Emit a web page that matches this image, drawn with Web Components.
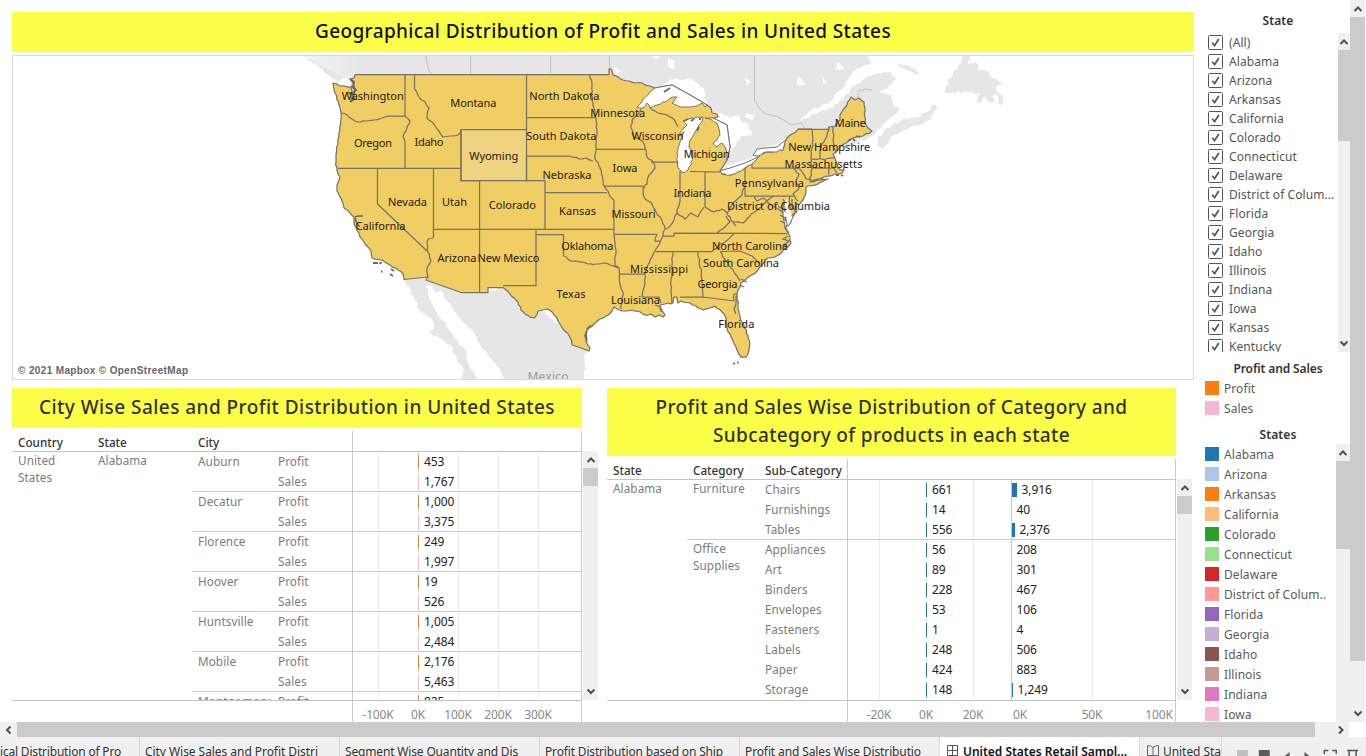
<!DOCTYPE html>
<html lang="en">
<head>
<meta charset="utf-8">
<title>United States Retail Sample</title>
<style>
html,body{margin:0;height:756px;overflow:hidden;background:#fff;font-family:"Noto Sans","Open Sans",sans-serif;font-size:12px;color:#333}
</style>
</head>
<body>
<retail-app></retail-app>
<script>
const define = (name, html, setup) => customElements.define(name, class extends HTMLElement {
  connectedCallback() {
    if (this.shadowRoot) return;
    this.attachShadow({mode: 'open'}).innerHTML = typeof html === 'function' ? html(this) : html;
    if (setup) setup(this, this.shadowRoot);
  }
});

/* One line of text, tracked so that it fills the width given in "w". */
define('fit-text', '<style>:host{display:inline-block;white-space:nowrap}span{display:inline-block}</style><span><slot></slot></span>', (el, root) => {
  const w = +el.getAttribute('w');
  if (!w) return;
  const s = root.querySelector('span'), n = el.textContent.length;
  const d = (w - s.getBoundingClientRect().width) / n;
  s.style.letterSpacing = d.toFixed(3) + 'px';
});

define('title-banner', '<style>:host{display:flex;flex-direction:column;align-items:center;background:#fbff48;font-size:19px;font-weight:500;line-height:28px;padding-top:5px;box-sizing:border-box;color:#333;flex:none}</style><slot></slot>');

/* Scroll bar: "size" is the thumb's length. */
define('scroll-bar', el => {
  const h = el.hasAttribute('horizontal');
  const arrow = d => `<i><svg width="10" height="10" viewBox="0 0 10 10"><path d="${d}" fill="none" stroke="#505050" stroke-width="2"/></svg></i>`;
  return `<style>:host{display:flex;flex-direction:${h ? 'row' : 'column'};background:#f0f0f0;flex:none}
  i{flex:none;display:flex;align-items:center;justify-content:center;${h ? 'width:17px' : 'height:17px'}}
  b{flex:none;background:#cbcbcb;${h ? 'width' : 'height'}:${el.getAttribute('size')}px}u{flex:1}</style>
  ${arrow(h ? 'M6.5 1.5 3 5 6.5 8.5' : 'M1.5 7 5 3.5 8.500 7')}<b></b><u></u>${arrow(h ? 'M3 1.5 6.5 5 3 8.5' : 'M1.5 2.500 5 6 8.5 2.500')}`;
});

define('check-item', `<style>:host{display:flex;align-items:center;height:19px;color:#555;letter-spacing:.07px;white-space:nowrap;flex:none}
i{width:13px;height:13px;border:1px solid #555;border-radius:1.5px;margin-right:6px;display:flex;flex:none}</style>
<i><svg width="13" height="13" viewBox="0 0 13 13"><path d="M3.2 6.8 5.6 9.5 9.8 3" fill="none" stroke="#555" stroke-width="1.7"/></svg></i><slot></slot>`);

define('legend-item', el => `<style>:host{display:flex;align-items:center;height:20px;color:#5b5b5b;letter-spacing:.07px;white-space:nowrap;flex:none}
i{width:14px;height:14px;background:${el.getAttribute('color')};margin-right:5px}</style><i></i><slot></slot>`);

/* ---- map ---- */
let seed = 7;
const rnd = () => (seed = (seed * 16807) % 2147483647) / 2147483647 - .5;
/* Points are "x,y"; a trailing ! keeps the segment to that point straight. */
const rough = (pts, amp = 1.5) => {
  let px, py, out = '';
  pts.trim().split(/\s+/).forEach((t, i) => {
    const straight = t.endsWith('!'), [x, y] = t.replace('!', '').split(',').map(Number);
    if (i && !straight) {
      const L = Math.hypot(x - px, y - py), n = Math.floor(L / 2.6);
      for (let k = 1; k < n; k++) {
        const o = rnd() * amp, f = k / n;
        out += `L${(px + (x - px) * f - (y - py) / L * o).toFixed(1)} ${(py + (y - py) * f + (x - px) / L * o).toFixed(1)}`;
      }
    }
    out += (i ? 'L' : 'M') + x + ' ' + y;
    px = x; py = y;
  });
  return out;
};
const LAND = `355,74.7 609,74.7! 609,69! 611,69 613,75 618,77 623,80 629,81 635,83 642,83 650,86 655,88 660,87 672,85! 690,95! 707,105! 711,108 712,113 717,114 718,117 713,118! 727,125! 730,147! 727,160! 720,171! 722,174 730,175 738,172 745,168 752,163 758,157 760,155 766,152 773,152 783,150 785,145 783,143 787,138 792,134 798,129.3 828,129.3! 829,127 832,126.5 835,126 840,120 840,115 843,110 847,105 851,97 855,100 859,98 864,102 865,122 868,128 872,131 863,136 853,138 846,143 840,147 836,152 833,154 835,158 837,163 838,168 843,171 844,167 842,173 835,174 827,176 814,180 810,182 820,180 828,179 818,184 808,186 806,187 806,193 803,200 799,205 796,203 797,211 793,217 791,222 788,226 786,218 786,208 783,203 783,213 784,220 785,226 787,231 790,236 791,243 788,247 784,249 780,254 775,257 768,258 763,264 757,271 750,276 744,281 741,283 738,290 737,294 738,305 740,317 744,325 749.5,341 749,350 746,357 741,357 738,352 736,347 733,341 730,334 727,328 726,318 722,312 715,306 710,308 703,310 696,306 690,303 681,301 678,303 677,297 674,297 673,303 665,304 660,305 662,310 665,315 663,317 659,315 655,317 651,314 645,315 640,312 632,310 626,311 619,310 614,307 612,311 606,316 600,319 594,324 589,328 586,333 586,341 590,348 589,351 581,348! 572,345! 571,339 566,332 560,324 557,318 552,312 548,309 543,310 538,311 536,316 534,318 527,315 521,310 518,302 510,294 503,287.5 488,287.5! 488,292.5! 461,292.5! 426,280! 428,277! 404,279.5! 403,274 398,270 390,265 382,260 372,258 371,251 365,244 360,237 357,230 354,222 354,217 350,213 344,208 342,201 337,191 337,186 340,177 337,170 336,162 336,155 338,142 340,130 341,113 339,105 335,93 333,83 340,86 351,88 353,94 351,101 355,94 354,86 350,79 354,78 355,74.7`;
const LINES = `405,74.7 405,116!|405,116 410,121 406,131 403,137 405,144 405,168!|341,113 347,115 352,119 358,122 366,121 374,120 382,118 391,116 405,116!|338,168.3 461,168.3!|414.5,74.7 414.5,89!|414.5,89 419,97 425,102 429,108 427,118 434,124 439,131 443,137 450,136 458,135 461,132|461,129.5 461,168.3!|526.5,74.7 526.5,130!|526.5,117.5 595,117.5!|377.5,168.3 377.5,204! 427,251!|433.5,168.3 433.5,229!|433.5,229 433,238 428,239 427,250 431,260 427,268 428,277|433.5,229.3 614,229.3!|461,168.3 461,180.7! 479.6,180.7! 479.6,292!|526.5,156 570,156!|570,156 579,159 586,158 593,161|526.5,156 526.5,180.7!|526.5,180.7 545,180.7! 545,229!|545,192.7 607,192.7!|536,229.3 536,285.5! 503,285.5!|536,234.5 563.5,234.5! 563.5,256!|563.5,256 571,261 580,262 588,264 596,264 604,263 610,265 618,268|590,74.7 592,86 592,100 595,112 596,121 597,130 596,149|596,149.3 645,149.3!|596,149 595,158 600,168 603,180 604,186 609,194 614,200|604,186 642,186! 645,188|614,200 614,234!|614,234.3 657,234.3! 655,241 660,241|614,234 616,250 615,265 619,268 619.5,274! 645,274!|619.5,274 620,284 623,292 622,300 621,309|645,274 645,283 643,290 642,297|642,297 659,297! 661,303|632,120 631,128 634,137 643,142 646,150 647,157 653,162 655,168 649,175 647,184 643,187 644,197 652,204 656,212 662,220 665,229 662,238 656,249 652,257 647,267 645,274|632,120 637,115 641,109|650,108 658,113 667,115 675,121 678,127|651,162 678,162!|680,171 680,201!|680,201 677,212 674,220 668,228 665,229|677,213 685,219 691,213 698,217 704,207|705,172 705,207!|705,207 714,212 722,209 727,213 733,203 742,195 744,188|690,171.5 720,172!|745,188 745,168! 745,196! 795,196!|752,164 752,168! 793,168!|793,168 799,174 796,182 799,188 793,194 798,201|793,168 800,169 806,179 812,180|727,213 733,222 743,223 751,214 761,207 768,200 774,196|726,216 730,222 725,227 717,233|733,222 736,226|662,236 674,236! 674,233! 787,233.5!|656,251.5 712,251.5!|712,251.5 718,246 726,241 734,234|673,251.5 671,290 672,303!|698,251.5 702,280 703,297!|680,297 703,297! 734,301!|734,301 734,294 737,294|720,251.5 726,261 734,272 740,281|720,251.5 740,251! 752,256! 760,264!|798,129 812,129!|812,129 813,140 812,148 811,158 812,169 810,181|829,127 827,136 822,144 820,151 820,159!|811,159 826,159 835,157|812,168 829,168!|829,168 829,175|829,168 834,168 837,173|833,127 834,148 836,153|754,196 757,201 763,198 770,204 778,209 783,213|790,196 790,208 796,208`;
const LAKES = [
 '637,107 643,99 655,88 660,87 672,85! 690,95! 707,105! 705,107 702,103 697,106 690,107 680,107 672,103 677,97 673,97 668,100 663,102 657,105 650,108 647,103 643,108 637,107',
 '680,133 687,125 683,121 692,118 703,117 702,122 698,127 695,132 690,140 689,147 692,157 691,165 688,170 682,173 678,168 677,153 680,142 684,132 680,136 680,133',
 '705,118 713,118! 727,125! 730,147! 727,160! 727,157 725,147 722,143 717,147 713,143 717,140 720,135 719,129 717,123 710,119 705,118',
 '720,171 730,168! 745,163! 758,157! 752,164 745,168 738,172 730,175 722,174 720,171',
 '753,155 757,149 765,148! 777,147! 783,142! 786,140 784,146 783,150 773,152 766,152 758,156 753,155'];
const LABELS = [['Washington',372.7,100,62],['Montana',473.3,107,46],['North Dakota',564.3,100,70],['South Dakota',561.3,140,70],['Minnesota',617.7,117,55],['Wisconsin',657.5,140,52],['Michigan',706.7,158,46],['Maine',850.3,127,31],['New Hampshire',829.3,151,82],['Massachusetts',823.5,168,78],['Pennsylvania',769.3,187,69],['District of Columbia',778.5,210,103],['Indiana',692.5,197,38],['Iowa',625,172,25],['Nebraska',567,179,49],['Wyoming',493.7,160,49],['Idaho',429,146,29],['Oregon',373,147,38],['Nevada',407.5,206,39],['Utah',454.5,206,25],['Colorado',512.3,209,47],['Kansas',577.5,215,37],['Missouri',633.5,218,44],['California',380.5,230,50],['Arizona',457,262,39],['New Mexico',508.5,262,62],['Oklahoma',587.3,250,52],['Mississippi',659,273,58],['Texas',571,298,29],['Louisiana',635.5,304,49],['Florida',736.3,328,36],['Georgia',717.5,288,40],['South Carolina',741,267,76],['North Carolina',750,250,76]];
define('us-map', () => `<style>:host{display:block;border:1px solid #d9d9d9;height:323px;flex:none}svg{display:block}
.g{fill:#e6e6e6}.w{fill:#fff}.s{fill:none;stroke:#77726a;stroke-width:1.25;stroke-linejoin:round}.c{fill:none;stroke:#b5b5b5;stroke-width:.8}
text{font-size:11px;text-anchor:middle;fill:#1c1a12}</style>
<svg width="1180" height="323" viewBox="13 56 1180 323">
<defs><linearGradient id="fade"><stop offset="0" stop-color="#fff" stop-opacity=".55"/><stop offset="1" stop-color="#fff" stop-opacity="0"/></linearGradient></defs>
<path class="g" d="${rough('304,56 866,56! 872,62 855,70 845,85 838,92 829,103 812,110 800,121 820,112 838,104 850,90 862,80 876,74 890,72 896,80 888,88 880,92 892,95 893,104 900,110 890,118 884,124 876,132 868,138 840,150 760,175 700,190 600,130 350,100 351,82 345,78 338,82 326,74 318,66 304,56', 3)}"/>
<path d="M304 56H360V75L348 80Z" fill="url(#fade)"/>
<path class="g" d="${rough('878,139 884,130 900,121 915,118 927,112 933,104 937,108 930,116 933,119 921,124 910,128 900,133 890,138 884,148 878,146 878,139', 3)}"/>
<path class="g" d="${rough('962,56 958,68 950,78 944,92 953,93 966,91 980,93 978,103 986,97 990,106 995,94 1001,105 1003,99 996,87 1003,82 990,76 992,70 978,70 976,62 968,65 970,56', 4)}"/>
<path class="g" d="${rough('896,63 908,65 916,70 920,75 909,71 900,67 896,63')}"/>
<path class="g" d="${rough('404,279 427,277 461,292.5 488,292 503,287 530,300 589,350 584,356 585,366 584,379 505,379! 497,366 488,355 480,344 472,330 460,318 452,307 444,296 441,290 436,293 432,286 426,284 428,294 433,305 437,313 443,321 452,333 458,342 466,352 469,364 475,375 477,379 461,379! 464,369 457,362 453,348 445,342 436,336 428,332 434,328 432,319 421,312 414,299 404,279', 2.4)}"/>
<path class="w" d="${rough('658,90 668,82 676,78 684,80 692,79 700,86 704,88 704,98 709,108 700,106 690,100 674,90 658,90', 3)} M668 58l6 2 0 9-6-2zM614 67l7 4-5 3zM660 56h-8l4 3zM745 78l6 4-4 3zM797 76l6 5 3 4-9 0zM838 62l7 7-10 1zM823 78l4 5-4 1zM747 113l8 3-3 4-7-3z"/>
<path class="w" d="${rough('713,116 720,113 730,118 737,115 743,122 748,124 753,137 745,136 737,140 733,148 730,152 725,130 713,118', 3)} M723 167L752 158L756 149L775 145L786 138L783 149L755 160L740 170Z"/>
<path class="c" d="M426 56q1 10 3 15l3 4M470.500 56v19M550.500 56v17M609.500 56v17M754.500 56v44q6 12 12 14l9 2 8 4 8 5 10-2 4 7M858 98v-7l8-2 6 1"/>
<path d="${rough(LAND)}" fill="#f1ce63" stroke="#77726a" stroke-width="1.25" stroke-linejoin="round"/>
<path d="M461 129.500H526.500V180.700H461Z" fill="#efd37e"/>
${LAKES.map(l => `<path class="w" d="${rough(l)}" stroke="#77726a" stroke-width="1"/>`).join('')}
<path class="s" d="${LINES.split('|').map(l => rough(l)).join('')}"/>
<path class="s" d="M461 168.300V129.500H526.500V180.700H461Z"/>
<path d="M350 79l4 3-1 5 3 3-4 4 2 5-4 3M348 92l5 3M351 86l5 4" fill="none" stroke="#6b675f" stroke-width="2"/>
<path d="M355 217l3-1 5 0M355 218l2 6 3 3M587 331l-2 5 2 5M591 325l-4 4" fill="none" stroke="#6b675f" stroke-width="1.600"/>
<path d="M373 263h5M379 263.500l3-1M391 269l3 2M390 274l3 2M381 271.500h1.500M733 364l2-1M737 362.500h1.500M697 131l2-4M691 121l3-2M684 121l4-2M699 119l2 0M664 92l6-4M841 175l2 1M836 175l3 0M853 139l2 2M848 141l3-2M856 136l4 1" stroke="#6b675f" stroke-width="1.800"/>
<path d="M783 199l3 6-2 5 4 4-3 5 3 5-3 4 4 5M778 206l6 4M780 215l5 3M780 221l5 2M792 199v7l4 6-5 4M788 236l-5 3 6 2-7 5 4 0M736 296l0 8-2 5 2 5M741 279l6 3M740 285l4 2M655 305l5 2 1 5" fill="none" stroke="#77726a" stroke-width="1.300"/>
<path class="w" d="M786 216l2 10 4-8-1-6-3-6-1-8-2 5z"/>
<g>${LABELS.map(([t, x, y, w]) => `<text x="${x}" y="${y}" textLength="${w}">${t}</text>`).join('')}
<text x="548" y="381" textLength="41" style="fill:#999;font-size:12px">Mexico</text></g>
<text x="18" y="374" textLength="170" style="text-anchor:start;font:bold 10px 'Liberation Sans',Arial,sans-serif;fill:#666">© 2021 Mapbox © OpenStreetMap</text>
</svg>`);

/* ---- cross tabs ---- */
const tableCss = `:host{display:flex;flex:none;margin-top:3px}
.t{position:relative;display:flex;flex-direction:column;flex:none}
.head{display:grid;border-bottom:1px solid #c4c4c4;color:#333;font-size:11.7px;font-weight:500;align-items:end;box-sizing:border-box;line-height:17px}
.body{overflow:hidden;border-bottom:1px solid #c4c4c4;box-sizing:border-box}
.row{display:grid;grid-template-rows:20px;height:20px;color:#7b7b7b;font-size:11.7px;letter-spacing:.1px;line-height:19px;white-space:nowrap}
.row .m{line-height:17px}
.v{color:#222;font-size:12px;display:flex;align-items:center;line-height:18px;letter-spacing:-.1px}
.v i{height:14px;flex:none}
.axis{display:flex;position:relative;height:21px;overflow:hidden;color:#888;font-size:12px}
.axis span{position:absolute;top:5px;line-height:18px;transform:translateX(-50%);letter-spacing:-.15px}
scroll-bar{width:15px;margin-left:1px}`;
const axis = a => `<div class="axis">${a.map(([t, x]) => `<span style="left:${x}px">${t}</span>`).join('')}</div>`;
const grid = xs => xs.map(([x, c]) => `linear-gradient(${c},${c}) ${x}px 0/1px 100% no-repeat`).join(',');

const CITIES = [['Auburn','453','1,767'],['Decatur','1,000','3,375'],['Florence','249','1,997'],['Hoover','19','526'],['Huntsville','1,005','2,484'],['Mobile','2,176','5,463'],['Montgomery','825','2,903']];
define('city-table', () => `<style>${tableCss}
.t{width:570px;background:${grid([[340,'#c9c9c9'],[569,'#c9c9c9']])}}
.head{height:21px;padding-left:6px;grid-template-columns:80px 100px 1fr}
.body{height:249px;background:${grid([[366,'#ececec'],[406,'#e4e4e4'],[446,'#ececec'],[486,'#ececec'],[526,'#ececec']])}}
.row{grid-template-columns:6px 80px 94px 6px 80px 140px 1fr}
.top{background:linear-gradient(#c9c9c9,#c9c9c9) 180px 0/100% 1px no-repeat;height:21px;margin-top:-1px;padding-top:1px;box-sizing:border-box}
.c{grid-column:4/6;padding-left:6px}
.v i{width:1px;margin-right:5px}scroll-bar{height:249px;margin-top:20px}</style>
<div class="t"><div class="head"><span>Country</span><span>State</span><span>City</span></div>
<div class="body">${CITIES.map(([c, p, s], i) => `<div class="row ${i ? 'top' : ''}"><span></span><span class="m">${i ? '' : 'United<br>States'}</span><span class="m">${i ? '' : 'Alabama'}</span><span class="c">${c}</span><span>Profit</span><span class="v"><i style="background:#e08a3c"></i>${p}</span></div><div class="row"><span></span><span></span><span></span><span class="c"></span><span>Sales</span><span class="v"><i style="background:#f0bcd0"></i>${s}</span></div>`).join('')}</div>
${axis([['-100K',366],['0K',406],['100K',446],['200K',486],['300K',526]])}</div>
<scroll-bar size="18"></scroll-bar>`);

const SUBS = [['Furniture','Chairs','661','3,916',5],['','Furnishings','14','40',0],['','Tables','556','2,376',3],['Office<br>Supplies','Appliances','56','208',0],['','Art','89','301',0],['','Binders','228','467',0],['','Envelopes','53','106',0],['','Fasteners','1','4',0],['','Labels','248','506',0],['','Paper','424','883',0],['','Storage','148','1,249',1]];
define('category-table', () => `<style>${tableCss}
.t{width:569px;background:${grid([[240,'#c9c9c9'],[568,'#c9c9c9']])}}
.head{height:21px;padding-left:6px;grid-template-columns:80px 72px 1fr}
.body{height:221px;background:${grid([[272,'#ececec'],[319,'#e4e4e4'],[366,'#ececec'],[404,'#c9c9c9'],[485,'#ececec']])}}
.row{grid-template-columns:6px 74px 6px 72px 161px 86px 1fr}
.top{background:linear-gradient(#c9c9c9,#c9c9c9) 80px 0/100% 1px no-repeat;height:21px;margin-top:-1px;padding-top:1px;box-sizing:border-box}
.v i{margin-right:5px;background:#2274ae}.v+.v i{margin-right:4.500px}scroll-bar{height:221px;margin-top:20px}</style>
<div class="t"><div class="head"><span>State</span><span>Category</span><fit-text w="77">Sub-Category</fit-text></div>
<div class="body">${SUBS.map(([c, s, p, v, w], i) => `<div class="row ${i === 3 ? 'top' : ''}"><span></span><span class="m">${i ? '' : 'Alabama'}</span><span></span><span class="m">${c}</span><span>${s}</span><span class="v"><i style="width:1px"></i>${p}</span><span class="v"><i style="width:${w}px"></i>${v}</span></div>`).join('')}</div>
${axis([['-20K',272],['0K',319],['20K',366],['0K',413],['50K',485],['100K',552]])}</div>
<scroll-bar size="18"></scroll-bar>`);

/* ---- side filters and legends ---- */
const STATES = ['Alabama','Arizona','Arkansas','California','Colorado','Connecticut','Delaware','District of Colum','Florida','Georgia','Idaho','Illinois','Indiana','Iowa','Kansas','Kentucky'];
const COLORS = ['#1f77b4','#aec7e8','#ff7f0e','#ffbb78','#2ca02c','#98df8a','#d62728','#ff9896','#9467bd','#c5b0d5','#8c564b','#c49c94','#e377c2','#f7b6d2'];
define('side-panel', () => `<style>:host{display:flex;flex-direction:column;width:145px;height:722px;overflow:hidden;flex:none}
h3{margin:0;font-size:12px;line-height:18px;height:18px;font-weight:600;color:#333;text-align:center;flex:none;padding-left:1px}
.f{display:flex;justify-content:space-between;overflow:hidden;flex:none}
.l{display:flex;flex-direction:column}
</style>
<h3 style="margin-top:12px"><fit-text w="31">State</fit-text></h3>
<div class="f" style="height:319px;margin-top:3px"><div class="l" style="padding-left:3px">${['(All)', ...STATES].map(s => `<check-item>${s}${/Colum/.test(s) ? '...' : ''}</check-item>`).join('')}</div><scroll-bar style="width:12px" size="91"></scroll-bar></div>
<h3 style="margin-top:8px"><fit-text w="89">Profit and Sales</fit-text></h3>
<legend-item color="#ff7f0e" style="margin-top:0">Profit</legend-item><legend-item color="#f7b6d2">Sales</legend-item>
<h3 style="margin-top:8px"><fit-text w="37">States</fit-text></h3>
<div class="f" style="height:278px"><div class="l">${COLORS.map((c, i) => `<legend-item color="${c}">${STATES[i]}${i === 7 ? '..' : ''}</legend-item>`).join('')}</div><scroll-bar style="width:14px;height:300px" size="88"></scroll-bar></div>`);

define('sheet-tab', `<style>:host{display:flex;align-items:flex-start;box-sizing:border-box;width:200px;height:19px;padding:6px 0 0 5px;border-right:1px solid #dadada;line-height:17px;font-size:12px;color:#333;white-space:nowrap;overflow:hidden;flex:none}
:host([active]){background:#fff;font-weight:600;color:#111;padding-left:7px}::slotted(svg){margin:2px 4px 0 0;flex:none}</style><slot name="icon"></slot><slot></slot>`);
define('tab-strip', `<style>:host{display:flex;height:19px;background:#f0f0f0;overflow:hidden}.i{margin-left:15px;margin-top:8px}</style>
<sheet-tab style="width:140px;padding-left:0"><fit-text w="121">ical Distribution of Pro</fit-text></sheet-tab>
<sheet-tab><fit-text w="173">City Wise Sales and Profit Distri</fit-text></sheet-tab>
<sheet-tab><fit-text w="173">Segment Wise Quantity and Dis</fit-text></sheet-tab>
<sheet-tab><fit-text w="178">Profit Distribution based on Ship</fit-text></sheet-tab>
<sheet-tab><fit-text w="176">Profit and Sales Wise Distributio</fit-text></sheet-tab>
<sheet-tab active><svg slot="icon" width="12" height="12" viewBox="0 0 12 12"><path d="M.5 .500h10v10H.5zM.5 5.500h10M5.500 .500v10" fill="none" stroke="#555"/></svg><fit-text w="164">United States Retail Sampl...</fit-text></sheet-tab>
<sheet-tab style="width:82px;padding-left:7px"><svg slot="icon" width="12" height="12" viewBox="0 0 12 12"><path d="M.5 .500q3 0 5.500 2 2.500-2 5.500-2v10H.5zM6 2.500v8" fill="none" stroke="#666"/></svg><fit-text w="58">United Sta</fit-text></sheet-tab>
<svg class="i" width="130" height="12" viewBox="0 0 130 12"><path d="M0 5h11v7H0z" fill="#c0c0c0"/><path d="M22 5h11v7H22zM53 7v5l-6 0zM68 7v5h6z" fill="#5b5b5b"/><path d="M88 9V5.500h4M96 5.500h4V9M111 5.500h11M113 5.500V12M120 5.500V12" fill="none" stroke="#555" stroke-width="1.500"/></svg>`);

define('retail-app', `<style>:host{display:flex;flex-direction:column;width:1366px;height:756px;overflow:hidden}
.top{display:flex;height:722px;flex:none}
.main{display:flex;flex-direction:column;width:1182px;padding:12px 11px 0 12px;flex:none}
.pair{display:flex;gap:8px;margin-top:8px}.pair>div{width:587px;display:flex;flex-direction:column;flex:none}
.h{display:flex}</style>
<div class="top"><div class="main">
<title-banner style="height:40px;color:#111"><fit-text w="576">Geographical Distribution of Profit and Sales in United States</fit-text></title-banner>
<us-map style="margin-top:3px"></us-map>
<div class="pair"><div><title-banner style="height:40px;width:570px"><fit-text w="516">City Wise Sales and Profit Distribution in United States</fit-text></title-banner><city-table></city-table></div>
<div><title-banner style="height:68px;width:569px"><fit-text w="472">Profit and Sales Wise Distribution of Category and</fit-text><fit-text w="357">Subcategory of products in each state</fit-text></title-banner><category-table></category-table></div></div>
</div><side-panel></side-panel><scroll-bar style="width:15px" size="644"></scroll-bar></div>
<div class="h"><scroll-bar horizontal size="1298" style="width:1349px;height:15px"></scroll-bar></div>
<tab-strip></tab-strip>`);
</script>
</body>
</html>
